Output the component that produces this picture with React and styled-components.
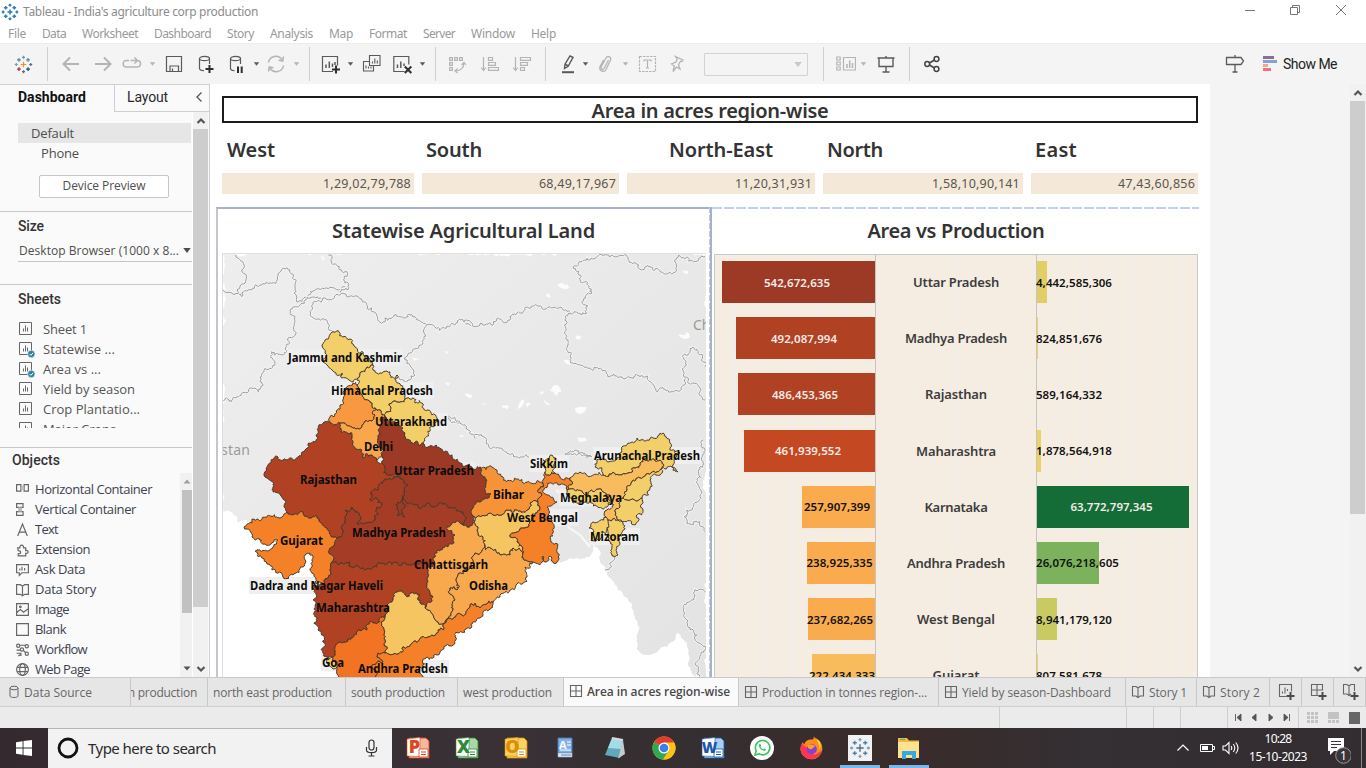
import React, { useLayoutEffect, useRef } from "react";
import styled, { createGlobalStyle } from "styled-components";

const Global = createGlobalStyle`
  * { box-sizing: border-box; }
  html, body { margin: 0; padding: 0; overflow: hidden; }
  body { font-family: "Noto Sans", "Open Sans", sans-serif; color: #333; }
  svg { display: block; flex: none; }
`;

/* Text run spread evenly over a known width through its letter spacing. */
const Run = styled.span`
  display: inline-block;
  white-space: pre;
`;
function Fit({ w, children }) {
  const ref = useRef(null);
  useLayoutEffect(() => {
    const el = ref.current;
    el.style.letterSpacing = "0px";
    const natural = el.getBoundingClientRect().width;
    el.style.letterSpacing = (w - natural) / el.textContent.length + "px";
  }, [w, children]);
  return <Run ref={ref}>{children}</Run>;
}

/* ---------- frame ---------- */
const Window = styled.div`
  width: 1366px;
  height: 768px;
  display: flex;
  flex-direction: column;
  background: #fff;
  overflow: hidden;
`;
const TitleBar = styled.header`
  height: 24px;
  flex: none;
  display: flex;
  align-items: center;
  padding: 0 0 1px 1px;
  font-size: 12px;
  color: #8c8c8c;
`;
const TitleText = styled.div`
  margin-left: 4px;
  flex: 1;
`;
const WinButtons = styled.div`
  display: flex;
  gap: 34px;
  padding: 0 19px 3px 0;
`;
const MenuBar = styled.nav`
  height: 19px;
  flex: none;
  display: flex;
  align-items: center;
  font-size: 12px;
  color: #999;
  padding-left: 8px;
`;
const MenuItem = styled.div`
  margin-right: ${(p) => p.$gap}px;
`;
const ToolBar = styled.div`
  height: 41px;
  flex: none;
  display: flex;
  align-items: center;
  background: #f4f4f4;
  border-top: 1px solid #ececec;
`;
const Tool = styled.div`
  width: ${(p) => p.$w || 20}px;
  margin-left: ${(p) => p.$gap}px;
  flex: none;
  display: flex;
  justify-content: center;
  color: ${(p) => (p.$off ? "#b4b4b4" : "#5a5a5a")};
`;
const Divider = styled.div`
  width: 1px;
  height: 34px;
  margin-left: ${(p) => p.$gap}px;
  flex: none;
  background: #cfcfcf;
`;
const Select = styled.div`
  width: 104px;
  height: 23px;
  margin-left: 17px;
  border: 1px solid #d2d2d2;
  border-radius: 1px;
  display: flex;
  align-items: center;
  justify-content: flex-end;
  padding-right: 4px;
  color: #c8c8c8;
`;
const ShowMe = styled.div`
  margin-left: 6px;
  font-family: Roboto, sans-serif;
  font-size: 14px;
  color: #222;
`;

const Body = styled.main`
  height: 593px;
  flex: none;
  display: flex;
  justify-content: flex-start;
  background: #f4f4f4;
  overflow: hidden;
`;

/* ---------- toolbar drawings ---------- */
const Icon = ({ children, s = 20, w, ...r }) => (
  <svg width={w || s} height={s} viewBox={`0 0 ${w || s} ${s}`} fill="none" stroke="currentColor" strokeWidth="1.2" {...r}>
    {children}
  </svg>
);
const CaretDown = ({ big }) => (
  <svg width={big ? 10 : 9} height={big ? 7 : 6} viewBox={big ? "1 0.500 7 5" : "0 0 9 6"}>
    <path d="M1.800 1.300h5.400L4.500 4.700z" fill="currentColor" />
  </svg>
);
const plus = (x, y, r, c) => <path key={`${x}-${y}`} d={`M${x - r} ${y}h${2 * r}M${x} ${y - r}v${2 * r}`} stroke={c} />;
const Cluster = ({ size = 20, mono, weight = 1.3 }) => {
  const c = (v) => mono || v;
  return (
    <svg width={size} height={size} viewBox="0 0 20 20" fill="none" strokeWidth={weight}>
      {plus(10, 10, 2.8, c("#eb912c"))}
      {plus(5.2, 5.2, 2, c("#59879b"))}
      {plus(14.8, 5.2, 2, c("#59879b"))}
      {plus(5.2, 14.8, 2, c("#c72035"))}
      {plus(14.8, 14.8, 2, c("#1f457e"))}
      {plus(10, 2.4, 1.6, c("#7199a6"))}
      {plus(10, 17.6, 1.6, c("#5b6591"))}
      {plus(2.4, 10, 1.6, c("#7199a6"))}
      {plus(17.6, 10, 1.6, c("#5b6591"))}
    </svg>
  );
};
const Bars = () => <path d="M6.500 14v-3.500M9.800 14V7.500M13 14V9.500" strokeWidth="1.500" />;
const ICONS = {
  back: <Icon strokeWidth="2"><path d="M18 10H3M9 3.500L2.500 10 9 16.500" /></Icon>,
  fwd: <Icon strokeWidth="2"><path d="M2 10h15M11 3.500l6.500 6.500-6.500 6.500" /></Icon>,
  replay: <Icon strokeWidth="1.500"><path d="M7 6.500H4.500C2.500 6.500 1.200 7.700 1.200 9.700S2.500 13 4.500 13h10.500c2.200 0 3.500-1.300 3.500-3.300S17.200 6.500 15.500 6.500H8.500M12.500 3.500l3 3-3 3" /></Icon>,
  save: <Icon><path d="M2.500 2.500h15v15h-15zM6 17v-5h8.500v5M8.500 17v-2.500" /></Icon>,
  dbAdd: <Icon><ellipse cx="8.500" cy="4.500" rx="5" ry="2.200" /><path d="M3.500 4.500v10c0 1.200 1.500 2 4.500 2.200M13.500 4.500V10" /><path d="M9.500 15h8M13.500 11v8" stroke="#2e2e2e" strokeWidth="2" /></Icon>,
  dbPause: <Icon><ellipse cx="8.500" cy="4.500" rx="5" ry="2.200" /><path d="M3.500 4.500v10c0 1.200 1.500 2 4 2.200M13.500 4.500V10" /><path d="M11 12.500v6.500M14.700 12.500v6.500" stroke="#2e2e2e" strokeWidth="2" /></Icon>,
  refresh: <Icon strokeWidth="1.500"><path d="M2.500 8.500A7.300 7.300 0 0 1 16 6M17.500 11.500A7.300 7.300 0 0 1 4 14M17.500 2.500L16.700 7l-4.200-.8M2.500 17.500L3.300 13l4.200.8" /></Icon>,
  sheetAdd: <Icon><path d="M12 17.500H1.500v-15h15v9" /><path d="M5 14v-3.500M8.300 14V7.500M11.500 13V9.500M14 11V8" strokeWidth="1.500" /><path d="M11 15.500h8M15 11.500v8" stroke="#2e2e2e" strokeWidth="2" /></Icon>,
  dup: <Icon strokeWidth="1.100"><path d="M7.500 1.500h10.500v10h-10.500zM7 7.500H1.500v9.500h10V12M4 14.500v-3M6.500 14.500v-2M9 14.500v-2M10.500 9.500v-2M12.800 9.500v-5M15.300 9.500v-3" /></Icon>,
  clear: <Icon><path d="M11.500 17.500H.8v-15h15v8" /><path d="M4.500 14v-3.500M7.800 14V7.500M11 12V9.500" strokeWidth="1.500" /><path d="M11.800 12.500l6.500 6.500M18.300 12.500l-6.500 6.500" stroke="#2e2e2e" strokeWidth="2" /></Icon>,
  swap: <Icon strokeWidth="1.200"><path d="M1.600 3.600h2.800v2.800H1.600zM6.600 3.600h2.800v2.800H6.600zM11.600 3.600h2.800v2.800h-2.800zM1.600 8.600h2.800v2.800H1.600zM1.600 13.600h2.800v2.800H1.600zM7 17c5 0 9-3 9-8M9.500 14.500L7 17l2.500 2M13.500 11L16 8.500l2 2.500" /></Icon>,
  asc: <Icon strokeWidth="1.200"><path d="M3.500 3v13M1.200 13.500l2.300 3 2.300-3M8.500 3.500h4v2.800h-4zM8.500 8.500h7v2.800h-7zM8.500 13.500h10v2.800h-10z" /></Icon>,
  desc: <Icon strokeWidth="1.200"><path d="M3.500 3v13M1.200 13.500l2.300 3 2.300-3M8.500 3.500h10v2.800h-10zM8.500 8.500h7v2.800h-7zM8.500 13.500h4v2.800h-4z" /></Icon>,
  pen: <Icon strokeWidth="1.400"><path d="M12 2l3 1.300-4.800 9-3.700 2.200.5-4.300zM7.500 10.500l3 1.500" /><path d="M4 18.200h12" strokeWidth="2" /></Icon>,
  clip: <Icon strokeWidth="1.300"><path d="M13.500 6l-4.500 8.500c-1 1.800-3.800.5-2.900-1.500L11 4c1.600-2.900 5.800-.9 4.500 2L11 15.500c-2.100 3.800-7.800 1-6-2.700L8.500 6" /></Icon>,
  text: <Icon strokeWidth="1.200"><path d="M1.500 2.500h16v15h-16z" strokeDasharray="2.500 1" /><path d="M6 7.500V6h7v1.500M9.500 6v8M8 14h3" /></Icon>,
  pin: <Icon strokeWidth="1.300"><path d="M8.500 2.500l7.500 3.500-1 1.500-1.500-.3-2 3.500 1.500 4.300L9.500 13 6 17.500 7.300 12 4.500 10 9 8l1.200-3z" /></Icon>,
  cards: <Icon><path d="M.8 3h3.400v3H.8zM.8 8h3.400v3H.8zM.8 13h3.400v3H.8zM7.500 3.500h12v12.500h-12z" /><path d="M11 14v-4M13.700 14V6.500M16.500 14V9" strokeWidth="1.500" /></Icon>,
  present: <Icon strokeWidth="1.400"><path d="M1.500 4h17M3 4v8.500h14V4M10 12.500V18M6.500 18h7M10 2v2" /></Icon>,
  share: <Icon strokeWidth="1.500" stroke="#444"><circle cx="5.200" cy="10" r="2.400" /><circle cx="14.500" cy="5" r="2.400" /><circle cx="14.500" cy="15" r="2.400" /><path d="M7.500 9l5-3M7.500 11l5 3" /></Icon>,
  sign: <Icon strokeWidth="1.300"><path d="M1.500 3.500h14.500l2.500 3.500-2.500 3.500H1.500zM10 1v2.500M10 10.500V18M7.500 18h5" /></Icon>,
};
const TOOLS = [
  ["logo", 13], ["|", 14], ["back", 13, 1], ["fwd", 12, 1], ["replay", 9, 1], ["v", 6, 1], ["save", 7], ["dbAdd", 12],
  ["dbPause", 11], ["v", 5], ["refresh", 5, 1], ["v", 6, 1], ["|", 8], ["sheetAdd", 11], ["v", 5], ["dup", 7], ["clear", 11],
  ["v", 5], ["|", 8], ["swap", 12, 1], ["asc", 12, 1], ["desc", 12, 1], ["|", 13], ["pen", 12], ["v", 3], ["clip", 5, 1],
  ["v", 6, 1], ["text", 8, 1], ["pin", 9, 1], ["select", 17], ["|", 15], ["cards", 12, 1], ["v", 3, 1], ["present", 8],
  ["|", 13], ["share", 12], ["sign", 283],
];

/* ---------- side pane ---------- */
const Side = styled.aside`
  width: 210px;
  flex: none;
  display: flex;
  flex-direction: column;
  background: #fafafa;
  border-right: 1px solid #cfcfcf;
  border-top: 1px solid #cfcfcf;
  font-family: "Open Sans", sans-serif;
  color: #4e4e4e;
`;
const SideTabs = styled.div`
  height: 27px;
  flex: none;
  display: flex;
  font-family: Roboto, sans-serif;
  font-size: 14px;
`;
const ActiveTab = styled.div`
  width: 114px;
  padding: 4px 0 0 18px;
  font-weight: 700;
  color: #111;
`;
const OtherTab = styled.div`
  flex: 1;
  display: flex;
  justify-content: space-between;
  border-left: 1px solid #cfcfcf;
  border-bottom: 1px solid #cfcfcf;
  padding: 4px 6px 0 12px;
  color: #2a2a2a;
`;
const SideBody = styled.div`
  flex: 1;
  min-height: 0;
  display: flex;
`;
const SideCol = styled.div`
  width: 193px;
  display: flex;
  flex-direction: column;
  border-right: 1px solid #fff;
`;
const Section = styled.section`
  height: ${(p) => p.$h}px;
  flex: none;
  border-bottom: ${(p) => (p.$last ? 0 : 1)}px solid #c9c9c9;
  overflow: hidden;
`;
const Device = styled.div`
  height: 20px;
  margin: ${(p) => p.$top || 0}px 1px 0 18px;
  padding-left: ${(p) => p.$in}px;
  line-height: 20px;
  font-size: 13px;
  background: ${(p) => (p.$on ? "#e6e6e6" : "transparent")};
`;
const PreviewButton = styled.div`
  width: 130px;
  height: 23px;
  margin: 12px 0 0 39px;
  border: 1px solid #c6c6c6;
  border-radius: 2px;
  background: #fff;
  font-size: 12px;
  line-height: 20px;
  text-align: center;
`;
const Heading = styled.h3`
  margin: 0;
  padding: ${(p) => p.$pad};
  font-family: Roboto, sans-serif;
  font-size: 14px;
  font-weight: 500;
  line-height: 18px;
  color: #333;
`;
const SizeSelect = styled.div`
  height: 22px;
  margin: 5px 0 0 18px;
  padding-left: 1px;
  display: flex;
  align-items: center;
  justify-content: space-between;
  font-size: 12px;
  border-bottom: 1px solid #c6c6c6;
`;
const SheetList = styled.div`
  height: 110px;
  margin-top: 10px;
  padding-top: 1px;
  overflow: hidden;
`;
const SheetRow = styled.div`
  height: 20px;
  display: flex;
  align-items: center;
  gap: 8px;
  padding-left: 19px;
  font-size: 13px;
  color: #555;
`;
const ObjectArea = styled.div`
  display: flex;
  height: 204px;
`;
const ObjectList = styled.div`
  width: 180px;
  padding-top: 6px;
  overflow: hidden;
`;
const ObjectRow = styled.div`
  height: 20px;
  display: flex;
  align-items: center;
  gap: 5px;
  padding-left: 15px;
  font-size: 13px;
  color: #3d4250;
`;
const Track = styled.div`
  width: ${(p) => p.$w}px;
  flex: none;
  display: flex;
  flex-direction: column;
  align-items: ${(p) => (p.$end ? "flex-end" : "stretch")};
  margin-left: ${(p) => (p.$push ? "auto" : 0)};
  background: #f1f1f1;
`;
const TrackEnd = styled.div`
  height: 17px;
  width: ${(p) => p.$w || 15}px;
  display: flex;
  align-items: center;
  justify-content: center;
  color: ${(p) => p.$c || "#555"};
  margin-top: ${(p) => (p.$bottom ? "auto" : 0)};
`;
const Thumb = styled.div`
  height: ${(p) => p.$h}px;
  width: ${(p) => p.$w || 15}px;
  background: ${(p) => p.$c || "#cdcdcd"};
`;
const Chev = ({ down }) => (
  <svg width="10" height="8" viewBox="0 0 10 8" fill="none" stroke="currentColor" strokeWidth="2.200">
    <path d={down ? "M1.500 2L5 5.500 8.500 2" : "M1.500 6L5 2.500 8.500 6"} />
  </svg>
);
const Tri = ({ down }) => (
  <svg width="8" height="5" viewBox="0 0 8 5">
    <path d={down ? "M.5 .5h7L4 4.500z" : "M.5 4.500h7L4 .5z"} fill="currentColor" />
  </svg>
);
const SheetIcon = ({ used }) => (
  <svg width="16" height="17" viewBox="0 0 16 17" fill="none" stroke="#666">
    <path d="M.5 1.500h12v12H.5zM4.500 10.500v-3M6.500 10.500v-6M8.500 10.500v-4" />
    {used && (
      <>
        <circle cx="12.300" cy="13" r="3.700" fill="#3380a1" stroke="#fafafa" strokeWidth=".6" />
        <path d="M10.600 13l1.300 1.300 2.200-2.500" stroke="#fff" />
      </>
    )}
  </svg>
);
const OBJ = {
  h: <><path d="M1.500 2.500h4v6h-4zM8.500 2.500h4v6h-4z" /><path d="M5.500 3.500h3v4h-3z" fill="#bbb" stroke="none" /></>,
  v: <><path d="M1.500 1.500h6v3.500h-6zM1.500 9h6v3.500h-6z" /><path d="M3 5h3.500v4H3z" fill="#bbb" stroke="none" /></>,
  t: <path d="M2.500 13L7 2l4.500 11M4 9.500h6" />,
  e: <path d="M2.500 5.500h2c-.5-3.500 4-3.500 3.500 0h2V8c3-1 3 3.500 0 2.500V13H3V11c3 0 3-3 0-3z" />,
  a: <><path d="M1.500 2.500h11v7.500H6.500L4 12.500V10H1.500z" /><path d="M4.500 8V6M6.500 8V4.500M9 8V5.500" /></>,
  d: <path d="M1.500 2.500h3.500l2 1.500 2-1.500h3.500v9H9L7 12.800 5 11.500H1.500zM7 4v8.500" />,
  i: <><path d="M1.500 1.500h11v11h-11zM2 9.500L5 7l3 2.500 4-3" /><circle cx="5" cy="4.500" r=".8" /></>,
  b: <path d="M1.500 1.500h11v11h-11z" />,
  w: <><circle cx="3" cy="3.500" r="1.500" /><circle cx="11" cy="4" r="1.500" /><circle cx="6.500" cy="7" r="1.500" /><circle cx="11" cy="11" r="1.500" /><path d="M4.500 3h5M1.500 7.500h3.500M8 8l2 2M1.500 10.500h4V13M3 13l2.500-1.500" /></>,
  g: <><circle cx="7" cy="7" r="5.500" /><ellipse cx="7" cy="7" rx="2.600" ry="5.500" /><path d="M2 5h10M2 9h10" /></>,
};
const SHEETS = [["Sheet 1", 44], ["Statewise ...", 72, 1], ["Area vs ...", 58, 1], ["Yield by season", 92], ["Crop Plantatio...", 97], ["Major Crops", 73]];
const OBJECTS = [["h", "Horizontal Container", 117], ["v", "Vertical Container", 101], ["t", "Text", 23], ["e", "Extension", 55], ["a", "Ask Data", 50], ["d", "Data Story", 61], ["i", "Image", 34], ["b", "Blank", 31], ["w", "Workflow", 52], ["g", "Web Page", 55]];

/* ---------- dashboard ---------- */
const Canvas = styled.div`
  width: 1000px;
  flex: none;
  background: #fff;
  padding: 12px 11px 0 6px;
  font-family: "Noto Sans", sans-serif;
  overflow: hidden;
`;
const Banner = styled.h1`
  height: 27px;
  margin: 0 1px 0 6px;
  border: 2px solid #1b1b1b;
  font-size: 20px;
  font-weight: 600;
  line-height: 25px;
  text-align: center;
  color: #333;
  overflow: hidden;
`;
const Regions = styled.div`
  height: 84px;
  display: flex;
  gap: 8px;
  padding: 11px 1px 0 6px;
`;
const Region = styled.div`
  width: ${(p) => p.$w}px;
`;
const RegionName = styled.div`
  height: 39px;
  padding-left: ${(p) => p.$in}px;
  font-size: 20px;
  font-weight: 600;
  line-height: 32px;
  color: #333;
`;
const RegionValue = styled.div`
  height: 21px;
  padding-right: 3px;
  background: #f4e9d9;
  text-align: right;
  font-size: 12.500px;
  line-height: 21px;
  color: #5a5650;
`;
const Panels = styled.div`
  display: flex;
  height: 470px;
`;
const MapPanel = styled.div`
  width: 493px;
  flex: none;
  border: 2px solid #c3c6cc;
  border-top-color: #a9b2c2;
  border-right: 0;
  border-bottom: 0;
  padding-left: 4px;
`;
const PanelSplit = styled.div`
  width: 3px;
  flex: none;
  background:
    linear-gradient(#a6b2c9, #a6b2c9) 1px 0 / 2px 100% no-repeat,
    repeating-linear-gradient(180deg, #c3cbdb 0 6px, #fff 6px 8px);
`;
const ChartPanel = styled.div`
  flex: 1;
  padding: 2px 1px 0 2px;
  background: repeating-linear-gradient(90deg, #c3d0e6 0 10px, #fff 10px 12px) 0 0 / 100% 2px no-repeat;
`;
const PanelTitle = styled.h2`
  height: ${(p) => p.$h}px;
  margin: 0;
  padding-right: ${(p) => p.$r || 0}px;
  font-size: 20px;
  font-weight: 600;
  line-height: 44px;
  text-align: center;
  color: #333;
`;
const Chart = styled.div`
  height: 424px;
  border: 1px solid #c9c9c9;
  background: #f6ede2;
  display: flex;
  flex-direction: column;
  overflow: hidden;
`;
const grid = (xs) => xs.map((x) => `linear-gradient(#ecedf0,#ecedf0) ${x}px 0 / 1px 100% no-repeat`).join(",");
const ChartRow = styled.div`
  height: 56.170px;
  flex: none;
  display: flex;
  &:first-child { margin-top: -1px; }
`;
const AreaCell = styled.div`
  width: 161px;
  flex: none;
  border-right: 1px solid #c4c4c4;
  display: flex;
  align-items: center;
  justify-content: flex-end;
  background: ${grid([19, 47, 75, 103, 132])};
`;
const StateCell = styled.div`
  width: 161px;
  flex: none;
  border-right: 1px solid #c4c4c4;
  display: flex;
  align-items: center;
  justify-content: center;
  background: ${grid([80])};
  font-size: 13px;
  font-weight: 600;
  color: #3c3c3c;
`;
const ProdCell = styled.div`
  flex: 1;
  display: flex;
  align-items: center;
  background: ${grid([23, 47, 71, 95, 119, 143])};
`;
const Bar = styled.div`
  height: 42px;
  width: ${(p) => p.$w}px;
  background: ${(p) => p.$c};
  color: ${(p) => (p.$light ? "#f5ece8" : "#111")};
  display: flex;
  align-items: center;
  justify-content: ${(p) => (p.$start ? "flex-start" : "center")};
  padding-right: ${(p) => (p.$start || p.$w < 60 ? 0 : 3)}px;
  font-size: 11.500px;
  font-weight: 600;
  white-space: nowrap;
`;
const Pull = styled.div`
  margin-left: -1px;
`;
const REGIONS = [
  ["West", 192, 5, 48, "1,29,02,79,788", 88], ["South", 197, 4, 56, "68,49,17,967", 77], ["North-East", 188, 42, 104, "11,20,31,931", 77],
  ["North", 200, 4, 56, "1,58,10,90,141", 88], ["East", 167, 4, 42, "47,43,60,856", 77],
];
const ROWS = [
  ["542,672,635", 153, "#9d3a26", "Uttar Pradesh", 86, "4,442,585,306", 76, 10, "#e2ce66"],
  ["492,087,994", 139, "#b14123", "Madhya Pradesh", 102, "824,851,676", 66, 1, "#f3cf69"],
  ["486,453,365", 137, "#b14123", "Rajasthan", 62, "589,164,332", 66, 0, "none"],
  ["461,939,552", 131, "#c44923", "Maharashtra", 80, "1,878,564,918", 76, 4, "#edd165"],
  ["257,907,399", 73, "#f9ab4e", "Karnataka", 63, "63,772,797,345", 82, 152, "#146c37"],
  ["238,925,335", 68, "#f9ab4e", "Andhra Pradesh", 98, "26,076,218,605", 83, 62, "#7bb25b"],
  ["237,682,265", 67, "#f9ab4e", "West Bengal", 78, "8,941,179,120", 76, 20, "#c9cb62"],
  ["222,434,333", 63, "#f9bc5c", "Gujarat", 47, "807,581,678", 66, 1, "#f3cf69"],
];

/* ---------- map ---------- */
const hash = (a, b, c, d) => {
  const v = Math.sin(a * 12.9898 + b * 78.233 + c * 37.719 + d * 4.581) * 43758.5453;
  return v - Math.floor(v) - 0.5;
};
/* Midpoint displacement; direction independent so neighbours share one border. */
const rough = (p, q, amp, out) => {
  const d = Math.hypot(q[0] - p[0], q[1] - p[1]);
  if (d < 2.4) {
    out.push(q);
    return;
  }
  const flip = p[0] > q[0] || (p[0] === q[0] && p[1] > q[1]);
  const [a, b] = flip ? [q, p] : [p, q];
  const k = (hash(a[0], a[1], b[0], b[1]) * amp * Math.min(d, 9)) / d;
  const m = [(a[0] + b[0]) / 2 - (b[1] - a[1]) * k, (a[1] + b[1]) / 2 + (b[0] - a[0]) * k];
  rough(p, m, amp, out);
  rough(m, q, amp, out);
};
const trace = (src, { ox = 0, oy = 0, k = 1, amp = 0.42, close = true } = {}) => {
  const pts = src.trim().split(/\s+/).map((s) => s.split(",").map(Number)).map(([x, y]) => [ox + x * k, oy + y * k]);
  const out = [pts[0]];
  for (let i = 1; i < pts.length; i++) rough(pts[i - 1], pts[i], amp, out);
  if (close) rough(pts[pts.length - 1], pts[0], amp, out);
  return "M" + out.map(([x, y]) => x.toFixed(1) + " " + y.toFixed(1)).join("L") + (close ? "Z" : "");
};
const NW = { ox: 215, oy: 250, k: 1 / 3, close: false };
const NE = { ox: 460, oy: 250, k: 1 / 3, close: false };
const SE = { ox: 460, oy: 420, k: 1 / 3, close: false };
const LAND = "222,254 706,254 706,678 695,677 690,667 687,647 677,633 667,647 650,655 637,650 640,627 633,610 623,593 607,573 600,560 598,548 593,545 588,557 558,563 534,562 500,590 440,600 340,560 303,540 262,530 245,520 237,522 232,512 222,510";
const BORDERS = [
  ["62,15 70,25 85,40 80,60 95,80 90,100 75,110 70,130 80,140 110,120 140,105 170,100 190,70 205,55 225,60 235,80 238,130 245,155 260,155 300,120 345,112 370,120 400,118 385,90 390,65 365,45 350,40 340,15", NW],
  ["25,120 45,127 70,130", NW],
  ["225,190 240,215 235,260 215,290 215,305 170,305 165,320 180,340 150,355 140,400 130,425 100,425 70,440 50,455 25,452", NW],
  ["400,118 375,125 375,135 345,148 270,150 245,170 225,190", NW],
  ["345,150 305,155 285,185 290,200 325,205 340,235 357,247", NW],
  ["375,135 415,140 455,175 475,185 500,220 560,200 600,200 635,225 660,232 690,235 740,210 780,228", NW],
  ["635,225 625,270 580,310 575,340 600,375 585,390 550,380", NW],
  ["665,490 700,500 730,520 780,565", NW],
  ["-40,495 0,520 40,555 70,560 100,590 160,620 210,625 250,628", NE],
  ["0,210 45,230 110,210 150,210 175,185 270,170 330,190 380,190 370,150 395,130 360,95 357,65 340,55 440,15 475,18 530,40 545,60 570,50 620,72 650,50 655,15 700,35 735,20", NE],
  ["330,190 315,200 325,270 320,300 345,340 380,352 440,372 520,385 545,375 570,395 590,425 640,425 665,410 670,375 680,345 670,315 690,295 715,305 735,350", NE],
  ["670,375 705,400 735,450", NE],
  ["315,612 350,600 395,620 360,610 315,612", NE],
  ["730,60 730,130 725,215 680,270 680,310 720,305 735,335", SE],
  ["735,515 700,520 695,540 670,575 700,630 735,690 705,730 720,770", SE],
  ["435,450 455,440 455,395", SE],
];
const LAKES = ["292,105 310,102 332,112 310,116", "258,132 270,130 272,140 260,140", "346,258 368,260 360,270 348,266", "652,252 675,255 680,245 690,262 660,260", "670,60 685,62 684,72 672,70", "270,420 290,405 305,422 290,438 282,428", "345,475 382,468 375,485 352,490", "125,465 150,466 140,477 128,474", "190,448 185,470 172,480 178,460", "12,433 38,438 25,443", "60,458 78,458 70,465", "235,430 255,425 245,434", "300,170 320,185 308,183", "312,330 340,325 330,345", "198,460 215,462 202,473", "352,562 382,572 362,576", "250,450 272,466 262,464"];
const NWLAKES = ["318,15 330,25 322,32", "590,320 615,330 600,332", "685,298 702,304 695,312", "745,433 772,437 760,442", "690,400 705,398 700,407", "730,555 750,558 740,562"];
const Y = "#f2cf68";
const STATES = [
  ["#b14123", "330,423 323,423 315,442 298,457 287,460 278,457 267,470 265,477 273,482 273,492 282,497 287,512 303,512 317,518 327,528 337,538 343,532 345,510 352,507 358,512 358,525 375,520 377,507 382,503 370,500 370,493 383,483 398,477 387,475 382,463 377,460 372,455 363,458 362,450 353,443 352,433 341,432 340,423"],
  ["#9d3a26", "385,416 392,422 403,428 405,433 415,442 423,443 428,447 448,453 460,463 472,467 480,467 482,475 487,480 485,490 491,494 480,502 473,508 473,516 473,523 467,527 463,525 463,512 448,508 428,503 418,507 407,503 403,497 405,517 397,515 397,508 402,498 408,485 400,477 398,477 387,475 382,463 383,458 384,450 378,447 378,430 380,420"],
  ["#a53c25", "398,477 400,477 408,485 402,498 397,508 397,515 405,517 403,497 407,503 418,507 428,503 448,508 463,512 463,525 447,527 455,535 448,547 438,550 433,560 430,567 415,562 402,565 388,563 378,563 365,570 355,567 342,563 332,562 333,547 337,538 343,532 345,510 352,507 358,512 358,525 375,520 377,507 382,503 370,500 370,493 383,483"],
  ["#f48127", "287,512 303,512 317,518 327,528 337,538 333,547 332,562 330,570 328,578 323,585 315,582 312,567 310,553 305,555 303,567 293,575 283,577 272,570 262,558 255,551 273,547 278,540 265,544 252,537 244,527 252,523 252,519 282,517"],
  ["#b14123", "332,562 342,563 355,567 365,570 378,563 388,563 402,565 415,562 430,567 428,577 430,593 433,597 425,608 420,603 420,595 405,595 397,592 393,600 387,605 385,615 382,617 375,623 367,630 357,632 352,638 338,643 335,652 332,657 323,653 318,630 313,600 312,587 323,585 328,578 330,570"],
  ["#f5c562", "397,592 405,595 420,595 420,603 425,608 428,610 438,622 445,623 443,630 428,637 412,643 395,653 385,653 385,640 383,627 385,615 387,605 393,600"],
  ["#f27321", "382,617 375,623 367,630 357,632 352,638 338,643 335,652 332,657 337,667 343,682 377,682 372,667 382,663 377,657 378,653 385,653 385,640 383,627 385,615"],
  ["#f48127", "378,653 385,653 395,653 412,643 428,637 443,630 445,623 462,615 475,603 480,608 493,602 480,618 467,628 455,637 455,643 442,650 437,655 427,657 423,667 423,682 377,682 372,667 382,663 377,657"],
  ["#f8a84d", "447,527 463,525 467,527 473,523 475,520 477,530 483,537 485,545 475,553 473,560 458,575 457,590 450,588 455,600 453,610 445,623 438,622 428,610 425,608 433,597 430,593 428,577 430,567 433,560 438,550 448,547 455,535"],
  ["#f8a84d", "485,545 485,550 497,553 510,555 513,548 523,553 533,562 525,567 527,577 523,583 510,590 500,597 493,602 480,608 475,603 462,615 445,623 453,610 455,600 450,588 457,590 458,575 473,560 475,553"],
  ["#f5c562", "473,516 493,515 508,510 527,510 530,503 538,502 540,508 532,520 525,528 510,535 517,542 523,548 523,553 513,548 510,555 497,553 485,550 485,545 483,537 477,530 475,520"],
  ["#f69337", "480,467 492,467 503,477 523,483 543,483 542,495 538,502 530,503 527,510 508,510 493,515 473,516 473,508 480,502 491,494 485,490 487,480 482,475"],
  ["#f48127", "545,472 555,473 560,477 570,478 567,490 557,483 548,483 543,490 547,495 557,502 547,507 552,520 553,533 557,552 557,562 550,556 546,562 543,556 542,562 533,562 523,553 523,548 517,542 510,535 525,528 532,520 540,508 538,502 542,495 543,483"],
  [Y, "543,460 552,455 556,460 555,473 545,472"],
  [Y, "334,332 339,332 343,337 350,339 355,347 363,352 369,358 373,365 367,367 360,373 358,378 353,382 342,378 342,373 332,370 327,365 325,353 322,345 325,340"],
  [Y, "373,365 380,373 387,371 390,375 397,375 398,383 403,388 405,399 397,402 389,404 388,412 385,416 382,415 375,408 370,402 362,395 357,385 358,378 360,373 367,367"],
  [Y, "405,399 407,398 415,403 428,410 437,418 430,427 423,443 415,442 405,433 403,428 392,422 385,416 388,412 389,404 397,402"],
  ["#f8983f", "357,385 353,383 343,392 340,405 330,417 330,423 340,423 352,427 362,425 370,420 375,415 375,408 370,402 362,395"],
  ["#f9a74a", "340,423 341,432 352,433 353,443 362,450 363,458 372,455 377,460 383,458 384,450 378,447 378,430 380,420 385,416 382,415 375,408 375,415 370,420 362,425 352,427"],
  [Y, "595,467 597,462 608,462 622,452 637,438 653,438 663,433 670,443 670,450 680,453 673,465 678,472 672,467 662,468 660,460 640,463 628,473 603,475 602,468"],
  ["#f8bb5d", "570,478 603,475 628,473 640,463 660,460 662,468 640,478 627,490 623,498 620,507 618,520 606,517 607,510 612,502 603,492 583,493 567,490"],
  [Y, "567,490 583,493 603,492 612,502 607,507 587,503 573,503 569,497"],
  [Y, "662,468 650,480 650,488 642,498 627,500 623,498 627,490 640,478"],
  [Y, "623,498 627,500 642,498 643,510 635,525 618,520 620,507"],
  [Y, "606,517 618,520 623,523 623,535 620,543 618,555 612,555 608,537"],
  [Y, "606,517 593,522 589,528 592,538 600,540 607,530"],
  ["#f0cc60", "327,657 332,657 337,667 333,669"],
];
const PLACES = [
  ["Jammu and Kashmir", 288, 114, 358], ["Himachal Pradesh", 331, 102, 391], ["Uttarakhand", 375, 72, 422], ["Delhi", 364, 29, 447],
  ["Rajasthan", 300, 57, 480], ["Uttar Pradesh", 394, 80, 471], ["Madhya Pradesh", 352, 94, 533], ["Gujarat", 280, 43, 541],
  ["Dadra and Nagar Haveli", 250, 133, 586], ["Maharashtra", 316, 74, 608], ["Goa", 322, 22, 663], ["Andhra Pradesh", 358, 90, 669],
  ["Bihar", 493, 31, 495], ["Sikkim", 530, 38, 464], ["West Bengal", 507, 71, 518], ["Meghalaya", 560, 62, 498], ["Mizoram", 590, 49, 537],
  ["Arunachal Pradesh", 594, 106, 456], ["Chhattisgarh", 414, 74, 565], ["Odisha", 469, 39, 586],
];
const MapSvg = styled.svg`
  border-left: 1px solid #dcdcdc;
  border-top: 1px solid #e3e0dc;
  font-family: "Noto Sans", sans-serif;
`;
const StateMap = () => (
  <MapSvg width="484" height="424" viewBox="223 254 483 423">
    <defs>
      <linearGradient id="land" x1="0" y1="0" x2="1" y2="1">
        <stop offset="0" stopColor="#eeeeee" />
        <stop offset="1" stopColor="#e3e3e3" />
      </linearGradient>
    </defs>
    <rect x="222" y="253" width="484" height="424" fill="#fff" />
    <path d={trace(LAND, { amp: 0.5 })} fill="url(#land)" />
    <path d="M568 527l12 8 10 12M556 490l14 12 14 4" stroke="#f8f8f8" strokeWidth="2" fill="none" />
    {LAKES.map((l) => <path key={l} d={trace(l, { ...NE, close: true })} fill="#fcfcfc" />)}
    {NWLAKES.map((l) => <path key={l} d={trace(l, { ...NW, close: true })} fill="#fcfcfc" />)}
    {BORDERS.map(([b, o]) => {
      const d = trace(b, { ...o, amp: 0.75 });
      return (
        <g key={b} fill="none">
          <path d={d} stroke="#f4f4f4" strokeWidth="2.600" />
          <path d={d} stroke="#9c9c9c" strokeWidth="1" />
        </g>
      );
    })}
    <text x="221" y="455" fontSize="14" fill="#9b9b9b" textLength="29">stan</text>
    <text x="693" y="330" fontSize="14" fill="#9b9b9b">Ch</text>
    {PLACES.map(([n, x, w, y]) => <rect key={n} x={x - 1} y={y - 9} width={w + 2} height="17" fill="#efefef" />)}
    {STATES.map(([c, s]) => <path key={s} d={trace(s, { amp: 0.75 })} fill={c} stroke="#4b3a2c" strokeWidth="1" strokeLinejoin="round" />)}
    {PLACES.map(([n, x, w, y]) => (
      <text key={n} x={x} y={y + 4} fontSize="12" fontWeight="700" fill="#0c0c0c" textLength={w} lengthAdjust="spacingAndGlyphs">{n}</text>
    ))}
  </MapSvg>
);

/* ---------- bottom ---------- */
const TabStrip = styled.div`
  height: 30px;
  flex: none;
  display: flex;
  border-top: 1px solid #c9c9c9;
  border-bottom: 1px solid #cfcfcf;
  background: #e6e6e6;
  font-family: "Open Sans", sans-serif;
  font-size: 12px;
  color: #666;
`;
const SheetTab = styled.div`
  width: ${(p) => p.$w}px;
  flex: none;
  display: flex;
  align-items: center;
  gap: ${(p) => p.$gap || 4}px;
  padding-left: ${(p) => p.$in}px;
  padding-bottom: ${(p) => (p.$on ? 2 : 0)}px;
  justify-content: ${(p) => (p.$clip ? "flex-end" : "flex-start")};
  padding-right: ${(p) => (p.$clip ? 10 : 0)}px;
  overflow: hidden;
  border-right: 1px solid #c9c9c9;
  background: ${(p) => (p.$on ? "#fafafa" : "transparent")};
  font-weight: ${(p) => (p.$on ? 600 : 400)};
  color: ${(p) => (p.$on ? "#4a4a4a" : "inherit")};
`;
const StatusBar = styled.div`
  height: 21px;
  flex: none;
  display: flex;
  background: #ebebeb;
`;
const StatusCell = styled.div`
  width: ${(p) => p.$w}px;
  border-right: ${(p) => (p.$end ? 0 : 1)}px solid #cfcfcf;
  display: flex;
  align-items: center;
  justify-content: space-between;
  padding: 0 ${(p) => p.$pad || 0}px;
`;
const TaskBar = styled.footer`
  height: 40px;
  flex: none;
  display: flex;
  background: linear-gradient(90deg, #34292f, #393136 35%, #352f31 50%, #3a2b2a 66%, #343034 80%, #332c31);
  color: #fff;
`;
const Start = styled.div`
  width: 48px;
  display: flex;
  align-items: center;
  justify-content: center;
`;
const Search = styled.div`
  width: 344px;
  display: flex;
  align-items: center;
  padding: 0 14px 1px 9px;
  background: #f2f2f2;
  border-top: 1px solid #b5b5b5;
  color: #2b2b2b;
  font-size: 15px;
`;
const SearchText = styled.div`
  flex: 1;
  margin-left: 9px;
  padding-bottom: 1px;
`;
const Apps = styled.div`
  display: flex;
  gap: 9.150px;
  padding-left: 6px;
  flex: 1;
`;
const AppSlot = styled.div`
  width: 40px;
  display: flex;
  align-items: center;
  justify-content: center;
  border-bottom: 3px solid ${(p) => (p.$open ? "#76b9ed" : "transparent")};
  padding-top: 3px;
`;
const Tray = styled.div`
  display: flex;
  align-items: center;
`;
const Clock = styled.div`
  width: 62px;
  margin: 0 12px 0 7px;
  font-size: 12px;
  line-height: 18px;
  display: flex;
  flex-direction: column;
  align-items: center;
  padding-bottom: 1px;
`;
const ShowDesktop = styled.div`
  width: 5px;
  height: 40px;
  margin-left: 10px;
  border-left: 1px solid #8a8588;
`;
const G14 = ({ children }) => <svg width="14" height="14" viewBox="0 0 14 14" fill="none" stroke="#666" strokeWidth="1.100">{children}</svg>;
const GridIcon = () => <G14><path d="M1.500 1.500h11v11h-11zM7 1.500v11M1.500 7h11" /></G14>;
const StoryIcon = () => <G14><path d="M1.500 1.500h3.500l2 1.500 2-1.500h3.500v9.500H9l-2 1.500-2-1.500H1.500zM7 3v9" /></G14>;
const NewIcon = ({ kind }) => (
  <svg width="18" height="18" viewBox="0 0 18 18" fill="none" stroke="#666" strokeWidth="1.100">
    {kind === "sheet" && <path d="M8.500 13.500h-7v-12h12v7M4.500 10.500V8.500M7 10.500v-6M9.500 8V6" />}
    {kind === "dash" && <path d="M8.500 12.500h-7v-11h11v6M7 1.500v11M1.500 7h11" />}
    {kind === "story" && <path d="M9 11l-2 1.500L5 11H1.500V1.500H5L7 3l2-1.500h3.500V8M7 3v9" />}
    <path d="M8.500 13h8M12.500 9v8" stroke="#4a4a4a" strokeWidth="2" />
  </svg>
);
const Office = ({ c, l, k }) => (
  <svg width="24" height="24" viewBox="0 0 24 24">
    <path d="M3 2h17l3 3v17H3z" fill={l} stroke={c} strokeWidth=".8" />
    <path d="M1 3l13-1.500v19L1 20z" fill={k === "O" ? l : "#fff"} stroke={c} strokeWidth=".6" />
    <path d="M13 13h9v8h-9z" fill="#fff" stroke={c} strokeWidth=".8" />
    <path d="M15 16h5M15 18.500h5" stroke={c} />
    <text x="8.500" y="17" textAnchor="middle" fontFamily="Open Sans, sans-serif" fontSize={k === "W" ? 15 : 18} fontWeight="800" fill={c}>{k}</text>
  </svg>
);
const APPS = [
  <Office c="#d9481f" l="#f7b79d" k="P" />,
  <Office c="#2f8a3a" l="#a9d8a5" k="X" />,
  <Office c="#dd8d09" l="#fbd35f" k="O" />,
  <svg width="22" height="24" viewBox="0 0 22 24"><path d="M4 2h14v15H4z" fill="#7fb2e6" stroke="#4679b5" /><path d="M4 17h14v4H4z" fill="#e9eef5" stroke="#9aa8ba" strokeWidth=".7" /><path d="M13 6h4M13 9h4M6 14h11" stroke="#fff" /><path d="M7 19h10" stroke="#7fa6d6" strokeWidth="1.500" /><text x="5" y="12.500" fontSize="11" fontWeight="700" fill="#fff" fontFamily="Open Sans, sans-serif">A</text></svg>,
  <svg width="24" height="24" viewBox="0 0 24 24"><path d="M9 2l11 2-3 18-15-3z" fill="#5fa9ba" /><path d="M9 2l11 2-2 9-13-1z" fill="#a3dce6" /><path d="M9 2l11 2" stroke="#d7dcdf" strokeWidth="2" /><path d="M20 4l2 14-7 4.500 1-3z" fill="#c6ccce" /></svg>,
  <svg width="24" height="24" viewBox="0 0 24 24"><circle cx="12" cy="12" r="11.500" fill="#fbc116" /><path d="M12 12L2 6.300A11.500 11.500 0 0 1 22 6.300z" fill="#e33b2e" /><path d="M12 12L2 6.300A11.500 11.500 0 0 0 11 23.500L16.500 15z" fill="#2da94f" /><path d="M12 6.500h10.100A11.500 11.500 0 0 1 11 23.500l6-8z" fill="#fbc116" /><circle cx="12" cy="12" r="5.500" fill="#fff" /><circle cx="12" cy="12" r="4.300" fill="#3b7ded" /></svg>,
  <Office c="#1c5bab" l="#a9cdf3" k="W" />,
  <svg width="26" height="26" viewBox="0 0 26 26"><circle cx="13" cy="13" r="12" fill="#fff" /><path d="M6 20l1.200-4.200A7.200 7.200 0 1 1 10 18.800z" fill="none" stroke="#35c65a" strokeWidth="1.600" /><path d="M10.200 9.500c.8-1 1.500-.3 1.800.8.300.8-.5 1-.5 1.500.6 1.300 1.500 2 2.700 2.500.6 0 .8-1 1.400-.8 1.500.6 1.800 1 .8 1.900-2 1.500-7.700-2.400-6.200-5.900z" fill="#35c65a" /></svg>,
  <svg width="25" height="25" viewBox="0 0 25 25"><path d="M12.500 3.500C15 4 15 1.500 14.500.8c3 1.500 3.500 4 4 5 1.500-.3 1-2 1-2 3 3 4 6 3.800 9.700A11 11 0 0 1 1.500 14c-.2-4 1.300-6.500 2.500-8 0 1.500.8 2 1.500 2 .5-2.500 3-4.500 7-4.500z" fill="#ff8a1e" /><path d="M1.500 14A11 11 0 0 0 23 15c-1-1-3 2-5 3-6 2-9-3-8-6-4-1-6-2-6-5-2 2-2.700 4.500-2.500 7z" fill="#fb3553" /><circle cx="12.800" cy="13.200" r="5" fill="#8142d6" /><path d="M9 9c4-1.500 6.500 0 7 1.500l-4 3-3-1.500z" fill="#ff9d2a" /><path d="M14.500.8c3 1.500 3.500 4 4 5 2 3 2 5 1.300 8 1.500-1 2-3 1.700-6-1-4-4-5-7-7z" fill="#ffdb3d" /></svg>,
  <svg width="24" height="26" viewBox="0 0 24 26"><path d="M0 0h24v26H0z" fill="#f1f1f1" /><g transform="translate(1.500 2.500) scale(1.050)" fill="none" stroke="#4f87a8" strokeWidth="1.300">{plus(10, 10, 3.5, "#4b6f88")}{plus(5, 5, 2, "#3d88b6")}{plus(15, 5, 2, "#3d88b6")}{plus(5, 15, 2, "#3d88b6")}{plus(15, 15, 2, "#3d88b6")}{plus(10, 2, 1.5, "#7c9fb5")}{plus(10, 18, 1.5, "#7c9fb5")}{plus(2, 10, 1.5, "#7c9fb5")}{plus(18, 10, 1.5, "#7c9fb5")}</g></svg>,
  <svg width="24" height="24" viewBox="0 0 24 24"><path d="M1 2h9l2 2.500h10V22H1z" fill="#f1bd3e" /><path d="M1 6h21v16H1z" fill="#fde292" /><path d="M5 23v-8h14v8h-4v-4H9v4z" fill="#35aae2" /><path d="M3 3.500h5" stroke="#3ea7d8" /></svg>,
];

export default function App() {
  return (
    <Window>
      <Global />
      <TitleBar>
        <Cluster size={18} mono="#2b7fae" weight={1.7} />
        <TitleText><Fit w={235}>Tableau - India's agriculture corp production</Fit></TitleText>
        <WinButtons>
          <Icon s={12} strokeWidth="1" stroke="#777"><path d="M2 6.500h10" /></Icon>
          <Icon s={12} strokeWidth="1" stroke="#777"><path d="M1.500 3.500h7v7h-7zM3.500 3.500v-2h7v7h-2" /></Icon>
          <Icon s={12} strokeWidth="1" stroke="#777"><path d="M1 1l10 10M11 1L1 11" /></Icon>
        </WinButtons>
      </TitleBar>
      <MenuBar>
        {[["File", 18, 16], ["Data", 24, 16], ["Worksheet", 56, 16], ["Dashboard", 57, 16], ["Story", 27, 16], ["Analysis", 43, 16], ["Map", 24, 16], ["Format", 38, 16], ["Server", 32, 16], ["Window", 44, 16], ["Help", 25, 0]].map(([t, w, g]) => (
          <MenuItem key={t} $gap={g}><Fit w={w}>{t}</Fit></MenuItem>
        ))}
      </MenuBar>
      <ToolBar>
        {TOOLS.map(([n, gap, off], i) => {
          if (n === "|") return <Divider key={i} $gap={gap} />;
          if (n === "v") return <Tool key={i} $gap={gap} $w={9} $off={off}><CaretDown /></Tool>;
          if (n === "select") return <Select key={i}><CaretDown big /></Select>;
          return <Tool key={i} $gap={gap} $off={off}>{n === "logo" ? <Cluster size={19} /> : ICONS[n]}</Tool>;
        })}
        <Tool $gap={18} $w={14}>
          <svg width="14" height="16" viewBox="0 0 14 16"><path d="M0 0h11v3H0z" fill="#8a6d9b" /><path d="M0 4h14v3H0z" fill="#7fa4cf" /><path d="M0 8h5v3H0z" fill="#f5a77f" /><path d="M0 12h8v3H0z" fill="#f96c7d" /></svg>
        </Tool>
        <ShowMe><Fit w={54}>Show Me</Fit></ShowMe>
      </ToolBar>
      <Body>
        <Side>
          <SideTabs>
            <ActiveTab><Fit w={68}>Dashboard</Fit></ActiveTab>
            <OtherTab>
              <Fit w={41}>Layout</Fit>
              <svg width="8" height="14" viewBox="0 0 8 14" fill="none" stroke="#555" strokeWidth="1.300"><path d="M6.500 3.500L2 8l4.500 4.500" /></svg>
            </OtherTab>
          </SideTabs>
          <SideBody>
            <SideCol>
              <Section $h={100}>
                <Device $on $top={11} $in={13}><Fit w={43}>Default</Fit></Device>
                <Device $in={23}><Fit w={38}>Phone</Fit></Device>
                <PreviewButton><Fit w={83}>Device Preview</Fit></PreviewButton>
              </Section>
              <Section $h={73}>
                <Heading $pad="5px 0 0 18px"><Fit w={26}>Size</Fit></Heading>
                <SizeSelect><Fit w={160}>Desktop Browser (1000 x 8...</Fit><CaretDown big /></SizeSelect>
              </Section>
              <Section $h={163}>
                <Heading $pad="5px 0 0 18px"><Fit w={43}>Sheets</Fit></Heading>
                <SheetList>
                  {SHEETS.map(([t, w, used]) => <SheetRow key={t}><SheetIcon used={used} /><Fit w={w}>{t}</Fit></SheetRow>)}
                </SheetList>
              </Section>
              <Section $h={229} $last>
                <Heading $pad="3px 0 4px 12px"><Fit w={48}>Objects</Fit></Heading>
                <ObjectArea>
                  <ObjectList>
                    {OBJECTS.map(([k, t, w]) => (
                      <ObjectRow key={t}>
                        <svg width="15" height="15" viewBox="0 0 14 14" fill="none" stroke="#666" strokeWidth="1.100">{OBJ[k]}</svg>
                        <Fit w={w}>{t}</Fit>
                      </ObjectRow>
                    ))}
                  </ObjectList>
                  <Track $w={12} $end>
                    <TrackEnd $w={10} $c="#a0a0a0"><Tri /></TrackEnd>
                    <Thumb $h={123} $w={10} $c="#c1c1c1" />
                    <TrackEnd $w={10} $bottom><Tri down /></TrackEnd>
                  </Track>
                </ObjectArea>
              </Section>
            </SideCol>
            <Track $w={15}>
              <TrackEnd><Chev /></TrackEnd>
              <Thumb $h={478} />
              <TrackEnd $bottom><Chev down /></TrackEnd>
            </Track>
          </SideBody>
        </Side>
        <Canvas>
          <Banner><Fit w={237}>Area in acres region-wise</Fit></Banner>
          <Regions>
            {REGIONS.map(([n, w, pad, nw, v, vw]) => (
              <Region key={n} $w={w}>
                <RegionName $in={pad}><Fit w={nw}>{n}</Fit></RegionName>
                <RegionValue><Fit w={vw}>{v}</Fit></RegionValue>
              </Region>
            ))}
          </Regions>
          <Panels>
            <MapPanel>
              <PanelTitle $h={44} $r={4}><Fit w={263}>Statewise Agricultural Land</Fit></PanelTitle>
              <StateMap />
            </MapPanel>
            <PanelSplit />
            <ChartPanel>
              <PanelTitle $h={45}><Fit w={177}>Area vs Production</Fit></PanelTitle>
              <Chart>
                {ROWS.map(([a, aw, ac, s, sw, p, pw, bw, bc], i) => (
                  <ChartRow key={s}>
                    <AreaCell><Bar $w={aw} $c={ac} $light={i < 4}><Fit w={66}>{a}</Fit></Bar></AreaCell>
                    <StateCell><Fit w={sw}>{s}</Fit></StateCell>
                    <ProdCell><Bar $w={bw} $c={bc} $light={i === 4} $start={i !== 4}>{i === 4 ? <Fit w={pw}>{p}</Fit> : <Pull><Fit w={pw}>{p}</Fit></Pull>}</Bar></ProdCell>
                  </ChartRow>
                ))}
              </Chart>
            </ChartPanel>
          </Panels>
        </Canvas>
        <Track $w={16} $push>
          <TrackEnd $w={15}><Chev /></TrackEnd>
          <Thumb $h={413} $w={15} />
          <TrackEnd $w={15} $bottom><Chev down /></TrackEnd>
        </Track>
      </Body>
      <TabStrip>
        <SheetTab $w={131} $in={8} $gap={4}>
          <svg width="12" height="14" viewBox="0 0 12 14" fill="none" stroke="#666"><ellipse cx="6" cy="3" rx="4" ry="1.800" /><path d="M2 3v8c0 2 8 2 8 0V3" /></svg>
          <Fit w={68}>Data Source</Fit>
        </SheetTab>
        <SheetTab $w={77} $clip><Fit w={92}>north production</Fit></SheetTab>
        <SheetTab $w={138} $in={5}><Fit w={119}>north east production</Fit></SheetTab>
        <SheetTab $w={112} $in={5}><Fit w={94}>south production</Fit></SheetTab>
        <SheetTab $w={106} $in={5}><Fit w={89}>west production</Fit></SheetTab>
        <SheetTab $w={175} $in={5} $on><GridIcon /><Fit w={143}>Area in acres region-wise</Fit></SheetTab>
        <SheetTab $w={200} $in={5}><GridIcon /><Fit w={165}>Production in tonnes region-...</Fit></SheetTab>
        <SheetTab $w={187} $in={5}><GridIcon /><Fit w={149}>Yield by season-Dashboard</Fit></SheetTab>
        <SheetTab $w={71} $in={5}><StoryIcon /><Fit w={38}>Story 1</Fit></SheetTab>
        <SheetTab $w={73} $in={5}><StoryIcon /><Fit w={40}>Story 2</Fit></SheetTab>
        <SheetTab $w={32} $in={8}><NewIcon kind="sheet" /></SheetTab>
        <SheetTab $w={32} $in={8}><NewIcon kind="dash" /></SheetTab>
        <SheetTab $w={32} $in={8}><NewIcon kind="story" /></SheetTab>
      </TabStrip>
      <StatusBar>
        <StatusCell $w={1000} />
        <StatusCell $w={127} />
        <StatusCell $w={27} />
        <StatusCell $w={27} />
        <StatusCell $w={47} />
        <StatusCell $w={71} $pad={6}>
          {["M1.500 1v7M7 1v7L3 4.500z", "M6 1v7L2 4.500z", "M2 1v7l4-3.500z", "M1 1v7l4-3.500zM6.500 1v7"].map((d) => (
            <svg key={d} width="9" height="9" viewBox="0 0 9 9" fill="#555" stroke="#555" strokeWidth=".9"><path d={d} /></svg>
          ))}
        </StatusCell>
        <StatusCell $w={67} $pad={7} $end>
          <svg width="54" height="12" viewBox="0 0 54 12" fill="#c3c3c3">
            {[0, 4, 8].flatMap((x) => [0, 4, 8].map((y) => <rect key={`${x}${y}`} x={x + 1} y={y} width="3" height="3" />))}
            <rect x="22" y="0" width="11" height="7" />
            {[22, 26, 30].map((x) => <rect key={x} x={x} y="8" width="3" height="3" />)}
            <rect x="43" y="0" width="11" height="12" fill="#666" />
          </svg>
        </StatusCell>
      </StatusBar>
      <TaskBar>
        <Start>
          <svg width="16" height="16" viewBox="0 0 16 16" fill="#fff"><path d="M0 2.200L6.600 1.300v6.300H0zM7.500 1.100L16 0v7.600H7.500zM0 8.400h6.600v6.300L0 13.800zM7.500 8.400H16V16l-8.500-1.100z" /></svg>
        </Start>
        <Search>
          <svg width="22" height="22" viewBox="0 0 22 22"><circle cx="11" cy="11" r="9" fill="none" stroke="#111" strokeWidth="2.800" /></svg>
          <SearchText><Fit w={128}>Type here to search</Fit></SearchText>
          <svg width="13" height="18" viewBox="0 0 13 18" fill="none" stroke="#333" strokeWidth="1.200"><rect x="4" y="1" width="5" height="10" rx="2.500" /><path d="M1.500 8v3c0 3.500 10 3.500 10 0V8M6.500 13.500V17M3.500 17h6" /></svg>
        </Search>
        <Apps>
          {APPS.map((a, i) => <AppSlot key={i} $open={i > 8}>{a}</AppSlot>)}
        </Apps>
        <Tray>
          <svg width="14" height="10" viewBox="0 0 14 10" fill="none" stroke="#fff" strokeWidth="1.200"><path d="M1.500 7.500L7 2l5.500 5.500" /></svg>
          <svg width="32" height="14" viewBox="0 0 32 14" fill="none" stroke="#fff"><path d="M10.500 3.500h12v7h-12zM23 5.500h1.500v3H23" /><path d="M12 5h6v4h-6z" fill="#fff" stroke="none" /></svg>
          <svg width="18" height="16" viewBox="0 0 18 16" fill="none" stroke="#fff" strokeWidth="1.100"><path d="M1 6h2.500L7 2.500v11L3.500 10H1zM9 6c1 1.300 1 2.700 0 4M11.300 4c2 2.700 2 5.300 0 8M13.700 2.500c3 3.500 3 7.500 0 11" /></svg>
          <Clock><Fit w={27}>10:28</Fit><Fit w={58}>15-10-2023</Fit></Clock>
          <svg width="30" height="34" viewBox="0 0 30 34"><path d="M7 7h16v13H13l-4 4v-4H7z" fill="#fff" /><path d="M10 10.500h10M10 13.500h10M10 16.500h6" stroke="#3a3236" strokeWidth="1.200" /><circle cx="22.500" cy="24.500" r="7.800" fill="#3a3538" stroke="#9b9799" /><text x="22.500" y="29" textAnchor="middle" fontSize="12" fill="#fff" fontFamily="Noto Sans, sans-serif">1</text></svg>
          <ShowDesktop />
        </Tray>
      </TaskBar>
    </Window>
  );
}
